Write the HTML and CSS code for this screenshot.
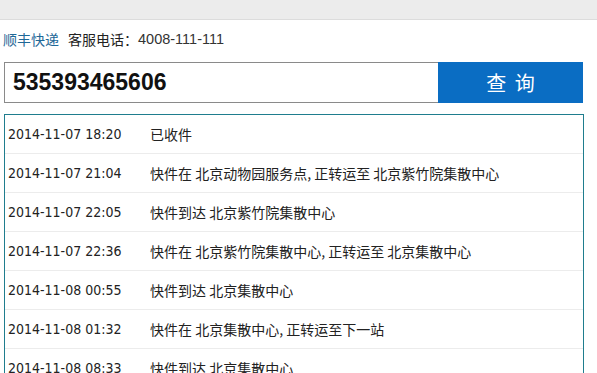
FILE: index.html
```html
<!DOCTYPE html>
<html lang="zh-CN">
<head>
<meta charset="utf-8">
<title>顺丰快递查询</title>
<link rel="stylesheet" href="styles.css">
</head>
<body>
<div class="topbar"></div>
<div class="info">
  <span class="brand">顺丰快递</span>
  <span class="label">客服电话：</span><span class="phone">4008-111-111</span>
</div>
<form class="search">
  <div class="field">535393465606</div>
  <button class="btn" type="button">查 询</button>
</form>
<div class="list">
  <div class="row"><span class="time">2014-11-07 18:20</span><span class="desc">已收件</span></div>
  <div class="row"><span class="time">2014-11-07 21:04</span><span class="desc">快件在 北京动物园服务点, 正转运至 北京紫竹院集散中心</span></div>
  <div class="row"><span class="time">2014-11-07 22:05</span><span class="desc">快件到达 北京紫竹院集散中心</span></div>
  <div class="row"><span class="time">2014-11-07 22:36</span><span class="desc">快件在 北京紫竹院集散中心, 正转运至 北京集散中心</span></div>
  <div class="row"><span class="time">2014-11-08 00:55</span><span class="desc">快件到达 北京集散中心</span></div>
  <div class="row"><span class="time">2014-11-08 01:32</span><span class="desc">快件在 北京集散中心, 正转运至下一站</span></div>
  <div class="row"><span class="time">2014-11-08 08:33</span><span class="desc">快件到达 北京集散中心</span></div>
</div>
</body>
</html>
```
FILE: styles.css
```css
html, body {
  margin: 0;
  padding: 0;
  background: #ffffff;
  font-family: "Noto Sans CJK SC", "Liberation Sans", sans-serif;
  color: #222;
  overflow: hidden;
}
.topbar {
  height: 19px;
  background: #ececec;
  border-bottom: 1px solid #dcdcdc;
}
.info {
  margin-top: 9px;
  padding-left: 3px;
  height: 20px;
  line-height: 20px;
  font-size: 14px;
  display: flex;
  align-items: center;
}
.brand {
  color: #1f6897;
  margin-right: 9px;
}
.label {
  color: #222;
}
.phone {
  font-family: "Liberation Sans", Arial, sans-serif;
  font-size: 14.5px;
  color: #333;
}
.search {
  display: flex;
  margin: 13px 0 0 4px;
  height: 41px;
}
.field {
  width: 425px;
  border: 1px solid #8a8a8a;
  border-right: none;
  padding-left: 8px;
  font-family: "Liberation Sans", Arial, sans-serif;
  font-weight: bold;
  font-size: 23px;
  color: #111;
  display: flex;
  align-items: center;
  box-sizing: content-box;
  height: 39px;
}
.btn {
  width: 145px;
  height: 41px;
  border: none;
  background: #0a6dc3;
  color: #ffffff;
  font-family: "Noto Sans CJK SC", sans-serif;
  font-size: 20px;
  letter-spacing: 2px;
  padding: 0 0 0 2px;
  margin: 0;
}
.list {
  margin: 11px 0 0 4px;
  width: 578px;
  border: 1px solid #1f7d8e;
  border-bottom: none;
}
.row {
  display: flex;
  align-items: center;
  height: 38px;
  border-bottom: 1px solid #ececec;
}
.time {
  width: 142px;
  padding-left: 3px;
  font-family: "DejaVu Sans Condensed", "DejaVu Sans", Verdana, sans-serif;
  font-stretch: condensed;
  font-size: 14px;
  color: #222;
}
.desc {
  font-size: 14px;
  color: #222;
}
```
